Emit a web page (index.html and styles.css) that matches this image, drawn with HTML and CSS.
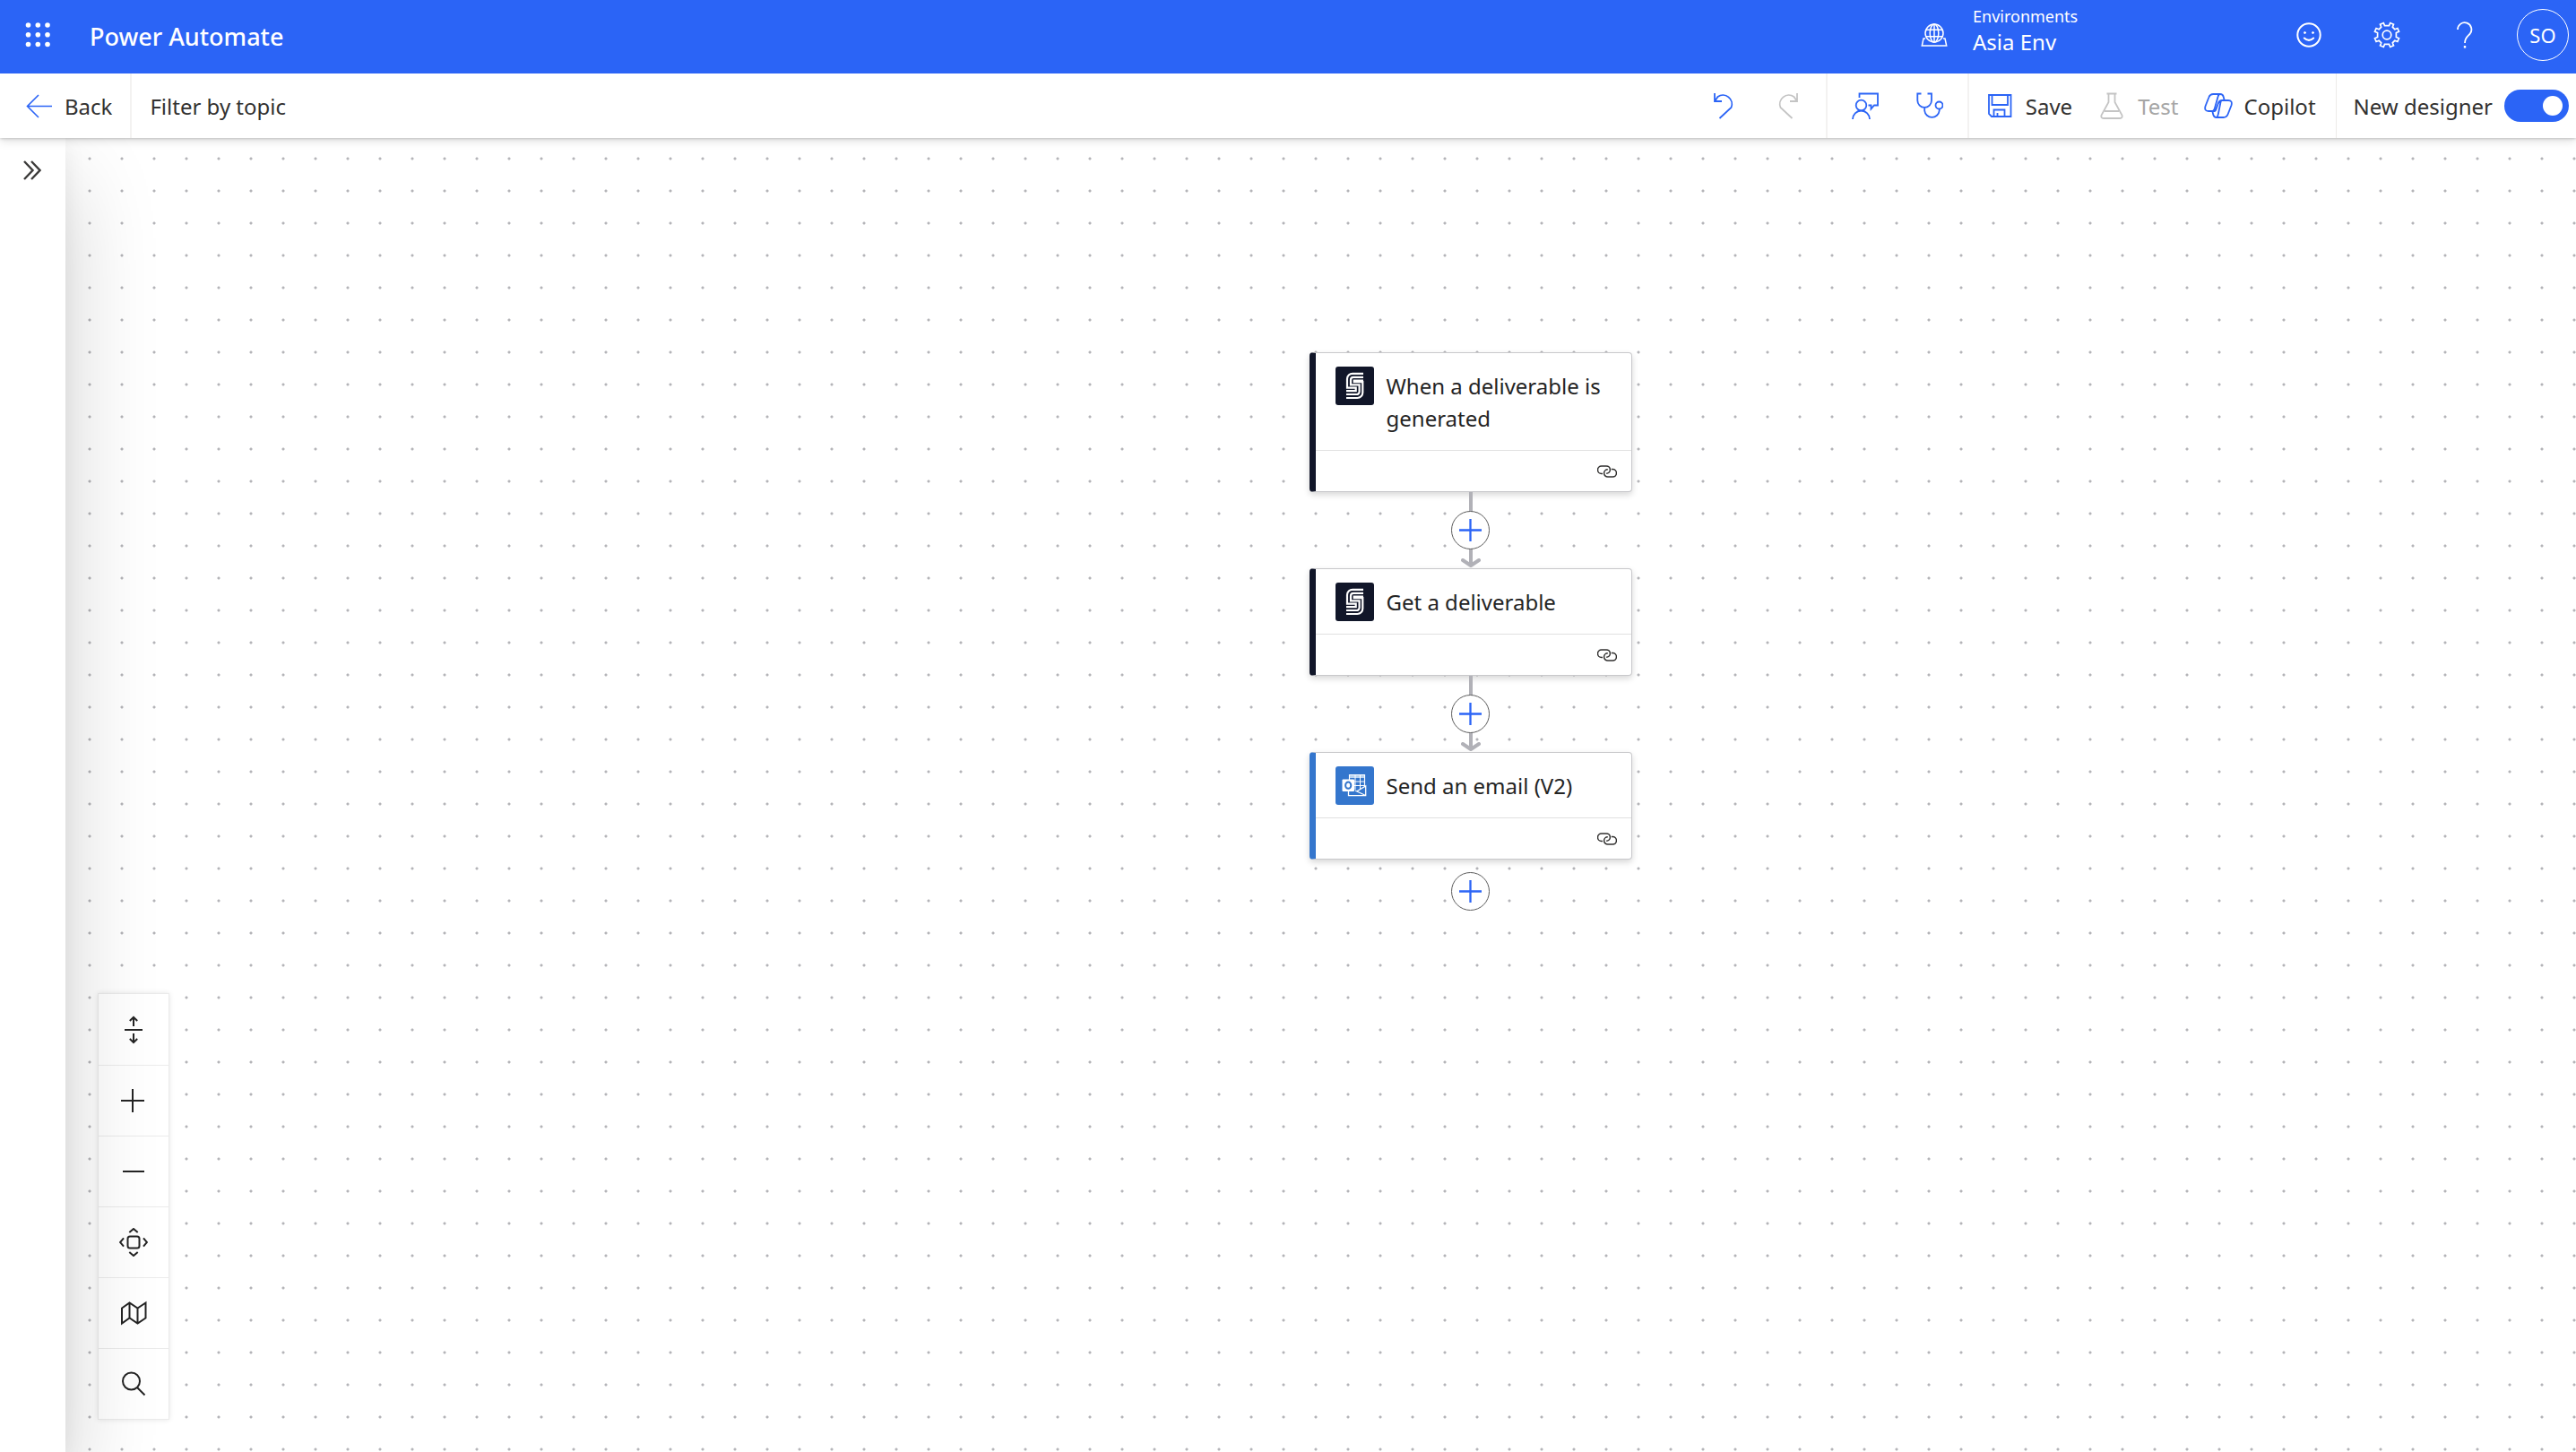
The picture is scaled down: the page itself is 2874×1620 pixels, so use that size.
FILE: index.html
```html
<!DOCTYPE html>
<html lang="en">
<head>
<meta charset="utf-8">
<title>Power Automate</title>
<link rel="stylesheet" href="styles.css">
</head>
<body>
<svg class="defs" aria-hidden="true">
  <symbol id="link" viewBox="0 0 22 14">
    <path d="M6 9.500H4.800A4.300 4.300 0 0 1 4.800 0.900H10.200A4.200 4.200 0 0 1 10.200 9.300M15.800 4.600H17.200A4.200 4.200 0 0 1 17.200 13.100H11.800A4.200 4.200 0 0 1 11.800 4.700"/>
  </symbol>
  <symbol id="plus" viewBox="0 0 26 26"><path d="M13 0V26M0 13H26"/></symbol>
  <symbol id="arrow" viewBox="0 0 22 11"><path d="M2 2L11 8L20 2"/></symbol>
  <symbol id="s-logo" viewBox="0 0 43 43">
    <path d="M31 7.800H19A6 6 0 0 0 13 13.800V23.700H22.700V27.100H12M31 11.900H20A3 3 0 0 0 17 14.900V20.400H26.600V28A3 3 0 0 1 23.600 31H12M31 15.700H20.700V17.200H30.300V29A6 6 0 0 1 24.300 35H12"/>
  </symbol>
</svg>

<header class="header">
  <button class="waffle" aria-label="App launcher">
    <svg width="28" height="28" viewBox="0 0 28 28" fill="#fff"><circle cx="3.500" cy="3" r="2.800"/><circle cx="14.300" cy="3" r="2.800"/><circle cx="25" cy="3" r="2.800"/><circle cx="3.500" cy="13.700" r="2.800"/><circle cx="14.300" cy="13.700" r="2.800"/><circle cx="25" cy="13.700" r="2.800"/><circle cx="3.500" cy="24.500" r="2.800"/><circle cx="14.300" cy="24.500" r="2.800"/><circle cx="25" cy="24.500" r="2.800"/></svg>
  </button>
  <a class="brand" href="#">Power Automate</a>
  <button class="environment">
    <svg width="30" height="26" viewBox="0 0 30 26" fill="none" stroke="#fff" stroke-width="1.500"><circle cx="15" cy="11" r="10"/><ellipse cx="15" cy="11" rx="4.800" ry="10"/><path d="M6 7.300H24M6 14.700H24M15 1V21M5 17H3L1.300 25H28.700L27 17H25"/></svg>
    <span class="environment-text"><span class="environment-label">Environments</span><span class="environment-name">Asia Env</span></span>
  </button>
  <nav class="header-actions">
    <button class="header-button" aria-label="Feedback">
      <svg width="28" height="28" viewBox="0 0 28 28" fill="none" stroke="#fff" stroke-width="2" stroke-linecap="round"><circle cx="14" cy="14" r="12.700"/><path d="M8.800 17.500Q14 22.300 19.200 17.500"/><circle cx="9.500" cy="11.500" r="1" fill="#fff" stroke-width="1"/><circle cx="18.500" cy="11.500" r="1" fill="#fff" stroke-width="1"/></svg>
    </button>
    <button class="header-button" aria-label="Settings">
      <svg width="30" height="30" viewBox="0 0 30 30" fill="none" stroke="#fff" stroke-width="1.700"><circle cx="15" cy="15" r="4.800"/><path d="M12.500 4.600L11.300 1.500L7.500 3.100L8.700 6.200L6.200 8.700L3.100 7.500L1.500 11.300L4.600 12.500V17.500L1.500 18.700L3.100 22.500L6.200 21.300L8.700 23.800L7.500 26.900L11.300 28.500L12.500 25.400H17.500L18.700 28.500L22.500 26.900L21.300 23.800L23.800 21.300L26.900 22.500L28.500 18.700L25.400 17.500V12.500L28.500 11.300L26.900 7.500L23.800 8.700L21.300 6.200L22.500 3.100L18.700 1.500L17.500 4.600Z"/></svg>
    </button>
    <button class="header-button" aria-label="Help">
      <svg width="18" height="30" viewBox="0 0 18 30" fill="none" stroke="#fff" stroke-width="1.800"><path d="M1 9A7.700 7.700 0 1 1 14.500 14C11.500 17 9 18.500 9 24"/><path d="M9 27V29.600" stroke-width="2.400"/></svg>
    </button>
    <button class="avatar" aria-label="Account SO">SO</button>
  </nav>
</header>

<div class="toolbar">
  <button class="back">
    <svg width="29" height="27" viewBox="0 0 29 27" fill="none" stroke="#2b64f6" stroke-width="1.600"><path d="M14 1L1.500 13.500L14 26M1.500 13.500H29"/></svg>
    Back
  </button>
  <button class="topic">Filter by topic</button>
  <div class="tools">
    <div class="tool-group">
      <button class="tool" aria-label="Undo"><svg width="24" height="30" viewBox="0 0 24 30"><path d="M2 1V10H10M2.500 9.500L5.500 5A10 10 0 0 1 20.500 17L7.500 29"/></svg></button>
      <button class="tool off" aria-label="Redo" disabled><svg width="24" height="30" viewBox="0 0 24 30"><path d="M22 1V10H14M21.500 9.500L18.500 5A10 10 0 0 0 3.500 17L16.500 29"/></svg></button>
    </div>
    <div class="tool-group">
      <button class="tool" aria-label="Send feedback"><svg width="30" height="30" viewBox="0 0 30 30"><path d="M8.500 6V1.500H29V14.500H25L21.500 18.500V14.500H18.500M1 30A9.500 9.500 0 0 1 20 30"/><circle cx="10.500" cy="14.500" r="5.800"/></svg></button>
      <button class="tool" aria-label="Flow checker"><svg width="30" height="30" viewBox="0 0 30 30"><path d="M5.500 1.500H1.300V9A7.800 7.800 0 0 0 17 9V1.500H12.500M9.200 17V20.500A8.300 8.300 0 0 0 25.700 20.500V18.500"/><circle cx="25.500" cy="14.500" r="4"/></svg></button>
    </div>
    <div class="tool-group commands">
      <button class="command"><svg width="32" height="28" viewBox="0 0 32 28"><path d="M4 2H28.500V26H7L4 23ZM7.500 2V13H25V2M9.500 26V18.500H21.500V26M13.500 26V22"/></svg>Save</button>
      <button class="command off" disabled><svg width="32" height="30" viewBox="0 0 32 30"><path d="M10.500 1.500H21.500M12.500 1.500V11L4.500 25.500Q3.500 28.800 7 29H25Q28.500 28.800 27.500 25.500L19.500 11V1.500M8 21H24"/></svg>Test</button>
      <button class="command"><svg width="32" height="28" viewBox="0 0 32 28"><path d="M18 1H10.500Q6.500 1 5.200 5L1.500 14.500Q0 20 5 20H11.500Q13 20 13.800 17L15.800 11.500Q17 8 20 8H27Q32 8 30.500 13.500L26.800 23Q25.500 27 21.500 27H14Q11 27 10.300 24L9.300 20M22.700 8L21.700 4Q21 1 18 1Q16.200 1 15.500 4L12 16.500Q11 20 9.500 20M20 8Q19 8 18.500 10L16 22.500Q15 27 14 27"/></svg>Copilot</button>
    </div>
    <label class="designer-switch" for="designer">New designer<input id="designer" type="checkbox" role="switch" checked></label>
  </div>
</div>

<div class="workspace">
  <aside class="rail">
    <button class="expand" aria-label="Expand panel"><svg width="20" height="22" viewBox="0 0 20 22" fill="none" stroke="#3b3a39" stroke-width="2.400"><path d="M1 1L10.500 11L1 21M9 1L18.500 11L9 21"/></svg></button>
  </aside>
  <main class="canvas">
    <div class="flow">
      <article class="card">
        <div class="card-head"><svg class="card-icon" viewBox="0 0 43 43"><use href="#s-logo"/></svg><h2 class="card-title">When a deliverable is generated</h2></div>
        <div class="card-foot"><svg class="link"><use href="#link"/></svg></div>
      </article>
      <div class="connector"><button class="add" aria-label="Add step"><svg><use href="#plus"/></svg></button><svg class="arrow"><use href="#arrow"/></svg></div>
      <article class="card">
        <div class="card-head"><svg class="card-icon" viewBox="0 0 43 43"><use href="#s-logo"/></svg><h2 class="card-title">Get a deliverable</h2></div>
        <div class="card-foot"><svg class="link"><use href="#link"/></svg></div>
      </article>
      <div class="connector"><button class="add" aria-label="Add step"><svg><use href="#plus"/></svg></button><svg class="arrow"><use href="#arrow"/></svg></div>
      <article class="card outlook">
        <div class="card-head">
          <svg class="card-icon" viewBox="0 0 43 43">
            <path d="M15.500 22V9.500H32.500V22" stroke-width="1.200"/><path d="M16 10H32V13H16Z" fill="#b9d3f1" stroke="none"/><path d="M15.500 17H32.500M21 21.500H32.500M22 10V26M27.500 10V26" stroke-width="1"/>
            <path d="M14.500 28V32.600H33.700V22L23.500 28M22 27L33.500 32.500" stroke-width="1.300"/>
            <rect x="7.500" y="14.500" width="13.500" height="13.500" rx="1" fill="#fff" stroke="none"/><ellipse cx="14.200" cy="21.200" rx="3.100" ry="3.600" stroke="#3476cd" stroke-width="2"/>
          </svg>
          <h2 class="card-title">Send an email (V2)</h2>
        </div>
        <div class="card-foot"><svg class="link"><use href="#link"/></svg></div>
      </article>
      <button class="add last" aria-label="Add step"><svg><use href="#plus"/></svg></button>
    </div>
    <div class="view-controls">
      <button aria-label="Collapse actions"><svg width="32" height="32" viewBox="0 0 32 32"><path d="M6 16H26M16 12V2M11.800 6L16 1.800L20.200 6M16 20V30M11.800 26L16 30.200L20.200 26"/></svg></button>
      <button aria-label="Zoom in"><svg width="32" height="32" viewBox="0 0 32 32"><path d="M15 3V29M2 16H28"/></svg></button>
      <button aria-label="Zoom out"><svg width="32" height="32" viewBox="0 0 32 32"><path d="M4 16H28"/></svg></button>
      <button aria-label="Fit view"><svg width="32" height="32" viewBox="0 0 32 32"><rect x="9.500" y="9.500" width="13" height="13" rx="2.500"/><path d="M11.300 5L16 1L20.700 5M11.300 27L16 31L20.700 27M5 11.300L1 16L5 20.700M27 11.300L31 16L27 20.700"/></svg></button>
      <button aria-label="Toggle minimap"><svg width="32" height="32" viewBox="0 0 32 32"><path d="M3 10.500L11.500 4.500L20.500 10.500L29.500 4.500V21.500L20.500 27.500L11.500 21.500L3 27.500ZM11.500 4.500V21.500M20.500 10.500V27.500"/></svg></button>
      <button aria-label="Search"><svg width="32" height="32" viewBox="0 0 32 32"><circle cx="13.500" cy="13" r="9.500"/><path d="M20 20L28.500 28.500"/></svg></button>
    </div>
  </main>
</div>
</body>
</html>
```
FILE: styles.css
```css
* {
  box-sizing: border-box;
}

body {
  margin: 0;
  min-height: 100vh;
  display: flex;
  flex-direction: column;
  font-family: "Noto Sans", "Open Sans", sans-serif;
  font-size: 24px;
  color: #323130;
  background: #fff;
}

button {
  display: flex;
  align-items: center;
  margin: 0;
  padding: 0;
  border: 0;
  background: none;
  font: inherit;
  color: inherit;
}

svg {
  display: block;
  flex: none;
}

.defs {
  display: none;
}

/* Header */
.header {
  display: flex;
  align-items: center;
  height: 82px;
  padding: 0 8px 4px 28px;
  background: #2b64f6;
  color: #fff;
}

.brand {
  margin-left: 44px;
  padding-top: 4px;
  font-size: 27px;
  font-weight: 500;
  line-height: 36px;
  color: inherit;
  text-decoration: none;
}

.environment {
  gap: 28px;
  margin-left: auto;
}

.environment-text {
  display: flex;
  flex-direction: column;
  width: 331px;
  padding-bottom: 10px;
  text-align: left;
}

.environment-label {
  font-size: 18px;
  line-height: 26px;
}

.environment-name {
  line-height: 32px;
}

.header-actions {
  display: flex;
  align-items: center;
}

.header-button {
  justify-content: center;
  width: 87px;
  height: 78px;
}

.avatar {
  justify-content: center;
  width: 58px;
  height: 58px;
  margin-left: 15px;
  border: 1px solid #fff;
  border-radius: 50%;
  font-size: 22px;
}

/* Toolbar */
.toolbar {
  position: relative;
  z-index: 2;
  display: flex;
  height: 72px;
  background: #fff;
  box-shadow: 0 0 4px rgba(0, 0, 0, 0.3), 0 4px 10px rgba(0, 0, 0, 0.1);
  clip-path: inset(0 0 -20px 0);
}

.back {
  gap: 14px;
  padding: 0 20px 0 29px;
  border-right: 2px solid #f3f2f1;
}

.topic {
  padding: 0 20px;
}

.tools {
  display: flex;
  margin-left: auto;
}

.tools svg {
  fill: none;
  stroke: #2b64f6;
  stroke-width: 1.8;
}

.tool-group {
  display: flex;
  padding: 0 6px;
}

.tool-group + .tool-group {
  border-left: 2px solid #f3f2f1;
}

.tool {
  justify-content: center;
  width: 72px;
}

.commands {
  padding: 0 8px 0 4px;
}

.command {
  gap: 13px;
  padding: 0 14px;
}

.off {
  color: #a6a6a6;
}

.off svg {
  stroke: #c4c4c4;
}

.designer-switch {
  display: flex;
  align-items: center;
  gap: 13px;
  padding: 0 8px 0 19px;
  border-left: 1px solid #edebe9;
}

.designer-switch input {
  appearance: none;
  display: flex;
  align-items: center;
  justify-content: flex-end;
  width: 72px;
  height: 36px;
  margin: 0;
  padding: 7px;
  border-radius: 18px;
  background: #2b64f6;
}

.designer-switch input::before {
  content: "";
  width: 22px;
  height: 22px;
  border-radius: 50%;
  background: #fff;
}

/* Workspace */
.workspace {
  flex: 1;
  display: flex;
}

.rail {
  position: relative;
  z-index: 1;
  width: 73px;
  background: #fff;
  box-shadow: 0 46px 104px rgba(0, 0, 0, 0.2), 0 9px 26px rgba(0, 0, 0, 0.07);
}

.expand {
  justify-content: center;
  width: 71px;
  height: 72px;
}

.canvas {
  position: relative;
  flex: 1;
  display: flex;
  align-items: flex-end;
  padding: 36px;
  background-image: radial-gradient(circle at center, #b4b4b8 1px, transparent 2px);
  background-size: 36px 36px;
  background-position: 9px 5px;
}

.view-controls {
  display: flex;
  flex-direction: column;
  width: 80px;
  background: #fff;
  border: 1px solid #ebebeb;
  box-shadow: 0 0 6px rgba(0, 0, 0, 0.1);
}

.view-controls button {
  justify-content: center;
  height: 79px;
}

.view-controls button + button {
  border-top: 1px solid #ebebeb;
}

.view-controls svg {
  fill: none;
  stroke: #242424;
  stroke-width: 2;
}

/* Flow diagram */
.flow {
  position: absolute;
  top: 239px;
  left: calc(50% - 13px);
  display: flex;
  flex-direction: column;
  align-items: center;
  width: 360px;
}

.card {
  width: 100%;
  border: 1px solid #c8c8cb;
  border-left: 7px solid #111629;
  border-radius: 4px;
  background: #fff;
  box-shadow: 0 3px 7px rgba(0, 0, 0, 0.16);
}

.card-head {
  display: flex;
  align-items: flex-start;
  gap: 14px;
  padding: 15px 22px 14px;
}

.card-icon {
  width: 43px;
  height: 43px;
  border-radius: 3px;
  background: #111629;
  fill: none;
  stroke: #fff;
  stroke-width: 2.2;
}

.outlook {
  border-left-color: #3476cd;
}

.outlook .card-icon {
  background: #3476cd;
}

.card-title {
  margin: 0;
  padding: 4px 0 3px;
  font-size: 24px;
  font-weight: 400;
  line-height: 36px;
  color: #242424;
}

.card-foot {
  display: flex;
  justify-content: flex-end;
  align-items: center;
  height: 46px;
  padding-right: 16px;
  border-top: 1px solid #e1e1e1;
}

.link {
  width: 22px;
  height: 14px;
  fill: none;
  stroke: #323130;
  stroke-width: 1.5;
}

.connector {
  position: relative;
  display: flex;
  flex-direction: column;
  align-items: center;
  justify-content: space-between;
  height: 85px;
  padding-top: 21px;
  background: linear-gradient(#b1b1b7, #b1b1b7) center top / 4px 81px no-repeat;
}

.arrow {
  width: 22px;
  height: 11px;
  fill: none;
  stroke: #b1b1b7;
  stroke-width: 4;
  stroke-linecap: round;
  stroke-linejoin: round;
}

.add {
  justify-content: center;
  width: 43px;
  height: 43px;
  border: 1px solid #5c5c5c;
  border-radius: 50%;
  background: #fff;
}

.add svg {
  width: 25px;
  height: 25px;
  stroke: #2b64f6;
  stroke-width: 2.4;
}

.last {
  margin-top: 14px;
}
```
